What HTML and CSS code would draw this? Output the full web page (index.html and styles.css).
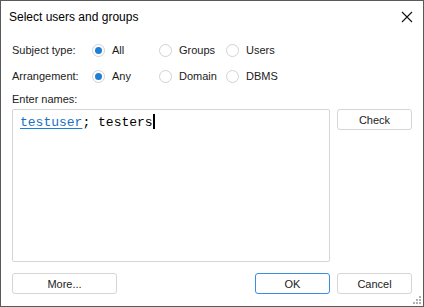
FILE: index.html
```html
<!DOCTYPE html>
<html lang="en">
<head>
    <meta charset="UTF-8">
    <title>Select users and groups</title>
    <link rel="stylesheet" href="styles.css">
</head>
<body>
    <div class="window">
        <div class="titlebar">
            <span class="title">Select users and groups</span>
            <span class="close">
                <svg width="12" height="12" viewBox="0 0 12 12"><path d="M1 1 L11 11 M11 1 L1 11" stroke="#111" stroke-width="1.1"/></svg>
            </span>
        </div>

        <div class="content">
            <div class="row">
                <span class="label">Subject type:</span>
                <span class="option"><span class="radio checked"></span>All</span>
                <span class="option"><span class="radio"></span>Groups</span>
                <span class="option"><span class="radio"></span>Users</span>
            </div>
            <div class="row">
                <span class="label">Arrangement:</span>
                <span class="option"><span class="radio checked"></span>Any</span>
                <span class="option"><span class="radio"></span>Domain</span>
                <span class="option"><span class="radio"></span>DBMS</span>
            </div>

            <div class="names-label">Enter names:</div>
            <div class="names">
                <div class="names-box">
                    <span class="resolved">testuser</span>; testers<span class="caret"></span>
                </div>
                <button class="btn">Check</button>
            </div>
        </div>

        <div class="footer">
            <button class="btn btn-more">More...</button>
            <span class="spacer"></span>
            <button class="btn btn-ok">OK</button>
            <button class="btn">Cancel</button>
        </div>

        <span class="grip">
            <svg width="10" height="10" viewBox="0 0 10 10" fill="#b0b0b0">
                <rect x="7" y="1" width="2" height="2"/>
                <rect x="4" y="4" width="2" height="2"/><rect x="7" y="4" width="2" height="2"/>
                <rect x="1" y="7" width="2" height="2"/><rect x="4" y="7" width="2" height="2"/><rect x="7" y="7" width="2" height="2"/>
            </svg>
        </span>
    </div>
</body>
</html>
```

FILE: styles.css
```css
body {
    margin: 0;
    font-family: "Liberation Sans", Arial, sans-serif;
    font-size: 11px;
    color: #1a1a1a;
}

.window {
    position: relative;
    width: 424px;
    height: 307px;
    box-sizing: border-box;
    border: 1px solid #5a5a5a;
    background-color: #fff;
    display: flex;
    flex-direction: column;
}

.titlebar {
    height: 31px;
    display: flex;
    align-items: center;
    padding-left: 8px;
    padding-right: 10px;
}

.title {
    flex: 1;
    font-size: 12px;
    color: #000;
}

.close {
    display: flex;
}

.content {
    padding: 8px 11px 0 11px;
    flex: 1;
}

.row {
    display: flex;
    align-items: center;
    height: 20px;
    margin-bottom: 6px;
}

.label {
    width: 80px;
    color: #222;
}

.option {
    width: 67px;
    display: flex;
    align-items: center;
}

.radio {
    width: 11px;
    height: 11px;
    border: 1px solid #d2d2d2;
    border-radius: 50%;
    margin-right: 7px;
    display: flex;
    align-items: center;
    justify-content: center;
}

.radio.checked::after {
    content: "";
    width: 7px;
    height: 7px;
    border-radius: 50%;
    background-color: #1f7fd6;
}

.names-label {
    margin-top: 1px;
    height: 17px;
    line-height: 14px;
    color: #222;
}

.names {
    display: flex;
    align-items: flex-start;
    gap: 7px;
}

.names-box {
    width: 318px;
    height: 153px;
    box-sizing: border-box;
    border: 1px solid #d5d5d5;
    border-radius: 2px;
    padding: 4px 7px;
    font-family: "Liberation Mono", "Courier New", monospace;
    font-size: 13px;
    line-height: 16px;
    color: #000;
}

.resolved {
    color: #1a6fc4;
    text-decoration: underline;
    text-decoration-color: #1a7fd8;
    text-decoration-thickness: 1px;
    text-underline-offset: 2px;
}

.caret {
    display: inline-block;
    width: 2px;
    height: 15px;
    background-color: #000;
    vertical-align: -3px;
}

.btn {
    width: 75px;
    height: 21px;
    border: 1px solid #d5d5d5;
    border-radius: 3px;
    background-color: #fff;
    font-family: "Liberation Sans", Arial, sans-serif;
    font-size: 11px;
    color: #222;
    padding: 0;
}

.footer {
    display: flex;
    align-items: center;
    gap: 7px;
    padding: 0 11px 12px 11px;
}

.btn-more {
    width: 105px;
}

.btn-ok {
    border-color: #3a8ee0;
}

.spacer {
    flex: 1;
}

.grip {
    position: absolute;
    right: 1px;
    bottom: 1px;
    display: flex;
}
```
